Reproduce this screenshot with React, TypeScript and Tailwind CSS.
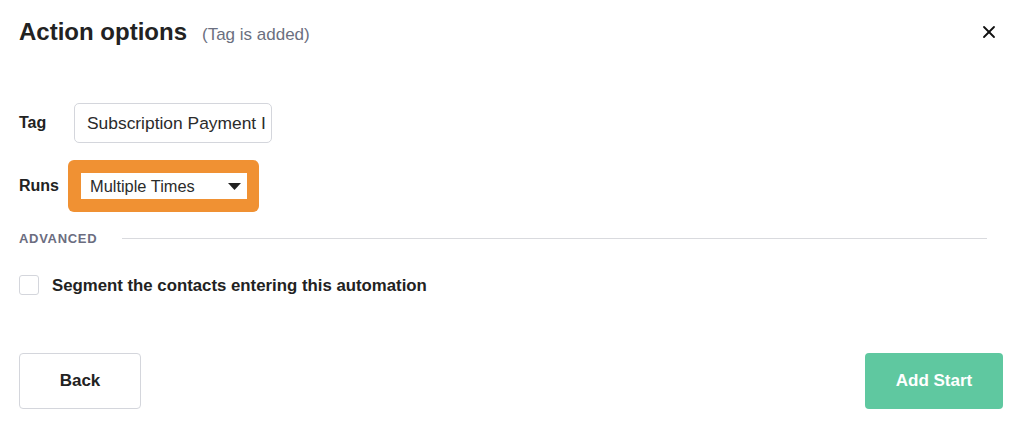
import { X } from "lucide-react";

export default function App() {
  return (
    <div className="w-[1024px] h-[428px] bg-white font-['Liberation_Sans',Arial,sans-serif] text-[#222] overflow-hidden">
      <div className="flex flex-col pl-[19px] pr-[21px]">
        {/* Header */}
        <div className="flex items-center h-[40px] mt-[12px]">
          <div className="flex items-baseline">
            <h2 className="text-[24px] font-bold leading-none text-[#222]">Action options</h2>
            <span className="ml-[15px] text-[17px] leading-none text-[#6b6f80]">(Tag is added)</span>
          </div>
          <button className="ml-auto mr-[4px] text-[#111]">
            <X className="w-[20px] h-[20px]" strokeWidth={2.2} />
          </button>
        </div>

        {/* Tag */}
        <div className="flex items-center mt-[51px]">
          <span className="w-[55px] text-[16px] font-bold">Tag</span>
          <div className="w-[198px] h-[40px] border border-[#d4d6dc] rounded-[5px] flex items-center pl-[12px] overflow-hidden">
            <span className="text-[17.4px] whitespace-nowrap text-[#2b2b2b]">Subscription Payment I</span>
          </div>
        </div>

        {/* Runs */}
        <div className="flex items-center mt-[17px]">
          <span className="w-[49px] text-[16px] font-bold">Runs</span>
          <div className="bg-[#f09133] rounded-[6px] p-[13px] pl-[13px] pr-[12px]">
            <div className="w-[166px] h-[26px] bg-white flex items-center pl-[9px] pr-[6px]">
              <span className="text-[16.4px] text-[#2b2b2b]">Multiple Times</span>
              <svg className="ml-auto" width="13" height="7" viewBox="0 0 13 7">
                <path d="M0 0 L13 0 L6.5 7 Z" fill="#222" />
              </svg>
            </div>
          </div>
        </div>

        {/* Advanced */}
        <div className="flex items-center mt-[17px]">
          <span className="text-[13px] font-bold tracking-[0.7px] text-[#6b6d80]">ADVANCED</span>
          <div className="flex-1 h-px bg-[#d9dade] ml-[25px] mr-[16px]" />
        </div>

        {/* Checkbox */}
        <label className="flex items-center mt-[24px]">
          <span className="w-[20px] h-[20px] border border-[#d4d6dc] rounded-[3px] bg-white" />
          <span className="ml-[13px] text-[16.8px] font-bold">Segment the contacts entering this automation</span>
        </label>

        {/* Footer */}
        <div className="flex items-center justify-between mt-[55px]">
          <button className="w-[122px] h-[56px] border border-[#d4d6dc] rounded-[4px] text-[17px] font-bold text-[#222] bg-white">
            Back
          </button>
          <button className="w-[138px] h-[56px] rounded-[4px] bg-[#5fc8a0] text-[17px] font-bold text-white">
            Add Start
          </button>
        </div>
      </div>
    </div>
  );
}
